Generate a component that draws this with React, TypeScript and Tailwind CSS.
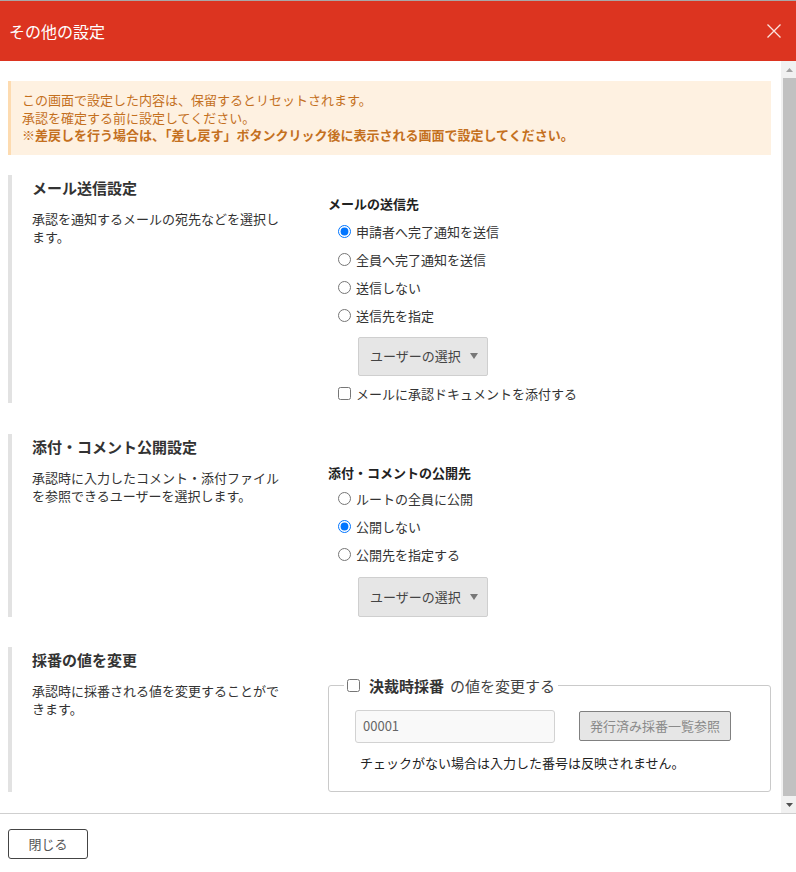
import React from "react";

function Radio({ checked, label, name }: { checked?: boolean; label: string; name: string }) {
  return (
    <label className="h-[28px] flex items-center pl-[10px] gap-[5px] text-[13px] leading-[18px] text-[#333]">
      <input type="radio" name={name} defaultChecked={checked} className="m-0 w-[13px] h-[13px]" />
      <span>{label}</span>
    </label>
  );
}

function SelectBtn({ h }: { h: string }) {
  return (
    <div
      className={`${h} ml-[30px] w-[130px] flex items-center pl-[11px] gap-[9px] bg-[#e6e6e6] border border-[#cfcfcf] rounded-[2px] text-[13px] text-[#444]`}
    >
      <span>ユーザーの選択</span>
      <svg width="8" height="6" viewBox="0 0 8 6">
        <path d="M0 0 L8 0 L4 6 Z" fill="#777" />
      </svg>
    </div>
  );
}

function LeftCol({ title, desc }: { title: string; desc: string }) {
  return (
    <div className="w-[316px] pl-[20px] shrink-0">
      <div className="text-[15px] font-bold leading-[26px] text-[#333]">{title}</div>
      <div className="mt-[9px] w-[256px] text-[13px] leading-[18px] text-[#333]">{desc}</div>
    </div>
  );
}

export default function App() {
  return (
    <div className="w-[796px] h-[872px] flex flex-col bg-white overflow-hidden font-['Noto_Sans_CJK_JP','Noto_Sans',sans-serif] text-[#333]">
      <div className="h-[61px] shrink-0 border-t border-[#a8a8a8] bg-[#dc3420] flex items-center justify-between pl-[9px] pr-[15px]">
        <span className="text-white text-[16px] leading-[22px]">その他の設定</span>
        <svg width="14" height="14" viewBox="0 0 14 14">
          <path d="M0.5 0.5 L13.5 13.5 M13.5 0.5 L0.5 13.5" stroke="#fbe3df" strokeWidth="1.3" />
        </svg>
      </div>

      <div className="flex-1 flex min-h-0">
        <div className="flex-1 overflow-hidden pl-[8px] pr-[10px] pt-[20px]">
          <div className="bg-[#fef1e1] border-l-[3px] border-[#fddbb0] pl-[11px] pt-[10px] pb-[11px] text-[13px] leading-[17.5px] text-[#c4701e]">
            <div>この画面で設定した内容は、保留するとリセットされます。</div>
            <div>承認を確定する前に設定してください。</div>
            <div className="font-bold">※差戻しを行う場合は、「差し戻す」ボタンクリック後に表示される画面で設定してください。</div>
          </div>

          <section className="mt-[20px] flex border-l-4 border-[#e2e2e2]">
            <LeftCol title="メール送信設定" desc="承認を通知するメールの宛先などを選択します。" />
            <div className="flex-1 pt-[20px]">
              <div className="text-[13px] font-bold leading-[18px] text-[#222]">メールの送信先</div>
              <div className="mt-[5px]">
                <Radio name="mail" checked label="申請者へ完了通知を送信" />
                <Radio name="mail" label="全員へ完了通知を送信" />
                <Radio name="mail" label="送信しない" />
                <Radio name="mail" label="送信先を指定" />
              </div>
              <div className="mt-[7px]">
                <SelectBtn h="h-[39px]" />
              </div>
              <label className="mt-[9px] h-[18px] flex items-center pl-[10px] gap-[5px] text-[13px] leading-[18px]">
                <input type="checkbox" className="m-0 w-[13px] h-[13px]" />
                <span>メールに承認ドキュメントを添付する</span>
              </label>
            </div>
          </section>

          <section className="mt-[31px] flex border-l-4 border-[#e2e2e2]">
            <LeftCol title="添付・コメント公開設定" desc="承認時に入力したコメント・添付ファイルを参照できるユーザーを選択します。" />
            <div className="flex-1 pt-[30px]">
              <div className="text-[13px] font-bold leading-[18px] text-[#222]">添付・コメントの公開先</div>
              <div className="mt-[3px]">
                <Radio name="pub" label="ルートの全員に公開" />
                <Radio name="pub" checked label="公開しない" />
                <Radio name="pub" label="公開先を指定する" />
              </div>
              <div className="mt-[8px]">
                <SelectBtn h="h-[40px]" />
              </div>
            </div>
          </section>

          <section className="mt-[30px] flex border-l-4 border-[#e2e2e2]">
            <LeftCol title="採番の値を変更" desc="承認時に採番される値を変更することができます。" />
            <div className="flex-1 pt-[27px]">
              <fieldset className="m-0 p-0 border border-[#cacaca] rounded-[3px] pb-[19px]">
                <legend className="ml-[15px] px-[3px] h-[24px] flex items-center text-[15px] leading-[24px]">
                  <input type="checkbox" className="m-0 w-[13px] h-[13px]" />
                  <span className="ml-[9px] font-bold text-[#333]">決裁時採番</span>
                  <span className="ml-[6px] text-[#444]">の値を変更する</span>
                </legend>
                <div className="pl-[26px] pt-[12px]">
                  <div className="flex items-start">
                    <div className="w-[200px] h-[33px] bg-[#f9f9f9] border border-[#d2d2d2] rounded-[3px] flex items-center pl-[7px] text-[13px] text-[#666]">
                      00001
                    </div>
                    <div className="ml-[24px] mt-[1px] w-[152px] h-[30px] bg-[#e6e6e6] border border-[#808080] rounded-[2px] flex items-center justify-center text-[13px] text-[#8a8a8a]">
                      発行済み採番一覧参照
                    </div>
                  </div>
                  <div className="mt-[11px] pl-[5px] text-[13px] leading-[18px] text-[#222]">
                    チェックがない場合は入力した番号は反映されません。
                  </div>
                </div>
              </fieldset>
            </div>
          </section>
        </div>

        <div className="w-[15px] shrink-0 bg-[#f1f1f1] flex flex-col">
          <div className="h-[17px] flex items-center justify-center pl-[2px]">
            <svg width="7" height="4" viewBox="0 0 7 4">
              <path d="M0 4 L7 4 L3.5 0 Z" fill="#a3a3a3" />
            </svg>
          </div>
          <div className="flex-1 ml-[2px] bg-[#c1c1c1]" />
          <div className="h-[17px] flex items-center justify-center pl-[2px]">
            <svg width="7" height="4" viewBox="0 0 7 4">
              <path d="M0 0 L7 0 L3.5 4 Z" fill="#505050" />
            </svg>
          </div>
        </div>
      </div>

      <div className="h-[59px] shrink-0 border-t border-[#cfcfcf] pl-[8px] pt-[15px]">
        <button className="w-[80px] h-[30px] border border-[#444] rounded-[3px] bg-white text-[13px] text-[#555] flex items-center justify-center">
          閉じる
        </button>
      </div>
    </div>
  );
}
